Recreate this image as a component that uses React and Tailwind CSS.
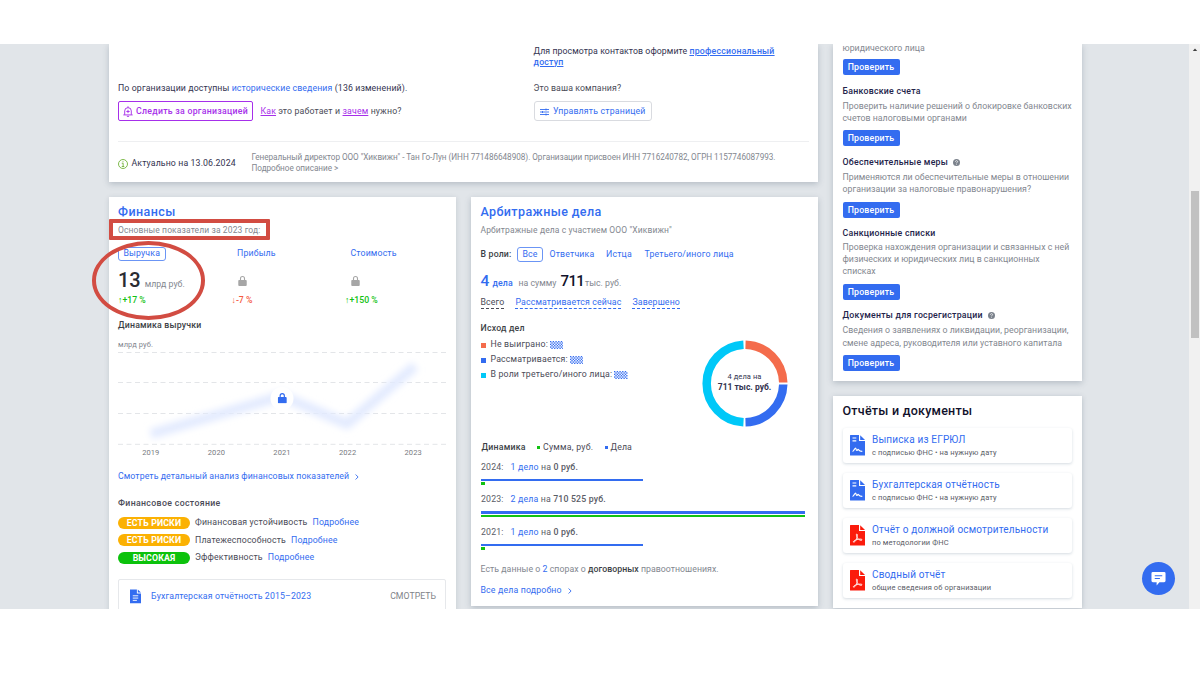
import React from "react";

const blue = "text-[#336cf0]";

function Lock({ className }) {
  return (
    <svg viewBox="0 0 16 18" className={className} fill="currentColor">
      <path
        fillRule="evenodd"
        d="M8 0a4.6 4.6 0 0 0-4.6 4.6V7H2a1.6 1.6 0 0 0-1.6 1.6v7.8A1.6 1.6 0 0 0 2 18h12a1.6 1.6 0 0 0 1.6-1.6V8.6A1.6 1.6 0 0 0 14 7h-1.4V4.6A4.6 4.6 0 0 0 8 0Zm2.6 7H5.4V4.6a2.6 2.6 0 0 1 5.2 0V7Z"
      />
    </svg>
  );
}

function Chevron() {
  return (
    <svg viewBox="0 0 4 6" className="w-[4px] h-[6px] ml-[6px]" fill="none" stroke="currentColor">
      <path d="M0.6 0.5 3.1 3 0.6 5.5" strokeWidth="0.9" />
    </svg>
  );
}

function Question() {
  return (
    <svg viewBox="0 0 14 14" className="w-[7px] h-[7px] ml-[5px]">
      <circle cx="7" cy="7" r="7" fill="#7b828c" />
      <path d="M4.9 5.4c0-2.9 4.3-2.7 4.3-.2C9.2 6.7 7 6.7 7 8.5M7 9.7v1.5" stroke="#fff" strokeWidth="1.5" fill="none" />
    </svg>
  );
}

// Hidden value placeholder
function Hatch() {
  const cells = [];
  for (let y = 0; y < 6; y++) {
    for (let x = 0; x < 10; x++) {
      if ((x + y) % 2 === 0) cells.push(<rect key={`${x}-${y}`} x={x} y={y} width="1" height="1" />);
    }
  }
  return (
    <svg viewBox="0 0 10 6" className="w-[13.5px] h-[8.1px] ml-[2px]" fill="#336cf0">
      {cells}
    </svg>
  );
}

function OrganizationCard() {
  return (
    <div className="h-[138px] bg-white px-[9px] shadow-[0_2px_6px_rgba(80,95,115,0.3)]">
      <div className="flex h-[97px]">
        <div className="w-[415.5px] pt-[38.5px]">
          <div className="leading-[11px] tracking-[0.12px] text-[#33334f]">
            По организации доступны <span className={blue}>исторические сведения</span> (136 изменений).
          </div>
          <div className="flex items-center mt-[7.5px]">
            <button className="flex items-center justify-center w-[134.5px] h-[20px] pt-px border-[1.5px] border-[#a62fea] rounded-[2px] text-[#a62fea] font-medium tracking-[0.26px]">
              <svg viewBox="0 0 18 20" className="w-[10px] h-[11px] mr-[3.5px] -mt-px" fill="none" stroke="currentColor" strokeWidth="1.7">
                <path d="M9 .5V3M3 16V9a6 6 0 0 1 12 0v7M0.5 16.2h17M7 18.8h4M9 7v6M6 10h6" />
              </svg>
              Следить за организацией
            </button>
            <div className="ml-[8px] pt-px tracking-[0.14px] text-[#4b4b57]">
              <span className="text-[#a62fea] underline">Как</span> это работает и{" "}
              <span className="text-[#a62fea] underline">зачем</span> нужно?
            </div>
          </div>
        </div>
        <div className="pt-[1.5px] w-[250px]">
          <div className="leading-[11px] tracking-[0.07px] text-[#33334f]">
            Для просмотра контактов оформите{" "}
            <span className="text-[#336cf0] font-medium underline tracking-[0.22px]">профессиональный доступ</span>
          </div>
          <div className="mt-[15px] leading-[11px] tracking-[0.1px] text-[#4b4b57]">Это ваша компания?</div>
          <button className="flex items-center justify-center w-[118.5px] h-[20px] mt-[7.5px] pt-px border border-[#d9dbe0] rounded-[3px] text-[#336cf0] tracking-[0.18px]">
            <svg viewBox="0 0 18 14" className="w-[9px] h-[8px] mr-[4px]" stroke="currentColor" strokeWidth="1.8">
              <path d="M0 2h18M0 7h18M0 12h18M12 0v4M5 5v4M12 10v4" />
            </svg>
            Управлять страницей
          </button>
        </div>
      </div>
      <div className="flex border-t border-[#eeeff1]">
        <div className="flex items-center w-[133.5px] h-[43px] text-[#33334f]">
          <svg viewBox="0 0 20 20" className="w-[10px] h-[10px] mr-[3.5px]" fill="none" stroke="#71b238" strokeWidth="1.8">
            <circle cx="10" cy="10" r="9" />
            <path d="M7.5 8.5h2.8V15M7.5 15h5M10 4.5v2" />
          </svg>
          <span className="tracking-[0.12px]">Актуально на 13.06.2024</span>
        </div>
        <div className="pt-[10px] text-[8.2px] leading-[11px] tracking-[-0.045px] text-[#83878f]">
          Генеральный директор ООО "Хиквижн" - Тан Го-Лун (ИНН 771486648908). Организации присвоен ИНН 7716240782, ОГРН
          1157746087993.
          <br />
          Подробное описание &gt;
        </div>
      </div>
    </div>
  );
}

const metrics = [
  { label: "Выручка", change: "↑+17 %", active: true },
  { label: "Прибыль", change: "↓-7 %", down: true },
  { label: "Стоимость", change: "↑+150 %" },
];

const states = [
  { badge: "ЕСТЬ РИСКИ", label: "Финансовая устойчивость" },
  { badge: "ЕСТЬ РИСКИ", label: "Платежеспособность" },
  { badge: "ВЫСОКАЯ", label: "Эффективность", good: true },
];

function FinanceCard() {
  return (
    <div className="relative w-[347px] h-[430px] bg-white pl-[9px] pr-[10px] pt-[7px] shadow-[0_1px_5px_rgba(80,95,115,0.2)]">
      <h2 className="text-[12.5px] leading-[16px] font-medium tracking-[0.45px] text-[#336cf0]">Финансы</h2>
      <div className="mt-[5px] leading-[11px] text-[8.5px] tracking-[0.12px] text-[#83878f]">
        Основные показатели за 2023 год:
      </div>

      <div className="flex mt-[10.5px]">
        {metrics.map((m) => (
          <div key={m.label} className="w-[113.5px] shrink-0">
            <div
              className={`flex items-center w-fit h-[14px] px-[4.5px] border rounded-[3px] text-[#336cf0] tracking-[0.15px] ${
                m.active ? "border-[#6b95f5]" : "border-transparent"
              }`}
            >
              {m.label}
            </div>
            <div className="flex items-center h-[20px] mt-[10.5px]">
              {m.active ? (
                <div className="flex items-baseline">
                  <span className="text-[20px] leading-[20px] font-medium text-[#292c33]">13</span>
                  <span className="ml-[4px] text-[#83878f]">млрд руб.</span>
                </div>
              ) : (
                <Lock className="w-[9px] h-[10px] ml-[6px] text-[#a6a6a6]" />
              )}
            </div>
            <div className={`mt-[4px] leading-[11px] font-medium ${m.down ? "text-[#f45a42]" : "text-[#12c212]"}`}>
              {m.change}
            </div>
          </div>
        ))}
      </div>

      <div className="mt-[14px] leading-[11px] font-medium tracking-[0.2px] text-[#3c3f46]">Динамика выручки</div>
      <div className="mt-[9px] leading-[10px] text-[7.5px] tracking-[0.08px] text-[#83878f]">млрд руб.</div>
      <svg viewBox="0 0 328 97" className="block w-[328px] h-[97px]">
        <defs>
          <filter id="soft" x="-10%" y="-20%" width="120%" height="140%">
            <feGaussianBlur stdDeviation="3.5" />
          </filter>
        </defs>
        <g stroke="#e3e5e8" strokeDasharray="5 3.5">
          <path d="M0 2.5h328M0 32.5h328M0 63.5h328M0 94.3h328" />
        </g>
        <path d="M33 84 164 46 229 74 297 16" fill="none" stroke="#e2eafe" strokeWidth="10" filter="url(#soft)" />
        <circle cx="164" cy="48.5" r="11.5" fill="#fff" />
        <svg x="159.5" y="43" width="9.5" height="10.5">
          <Lock className="w-[9.5px] h-[10.5px] text-[#336cf0]" />
        </svg>
      </svg>
      <div className="grid grid-cols-5 leading-[11px] text-[7.5px] text-center text-[#777a80] tracking-[0.1px]">
        <span>2019</span>
        <span>2020</span>
        <span>2021</span>
        <span>2022</span>
        <span>2023</span>
      </div>
      <div className="flex items-center mt-[13px] leading-[11px] tracking-[0.09px] text-[#336cf0]">
        Смотреть детальный анализ финансовых показателей
        <Chevron />
      </div>

      <div className="mt-[16px] leading-[11px] font-medium tracking-[0.34px] text-[#4b4b57]">Финансовое состояние</div>
      <div className="mt-[5px]">
        {states.map((s) => (
          <div key={s.label} className="flex items-center h-[17.5px] tracking-[0.15px]">
            <span
              className={`w-[72px] h-[12px] rounded-full text-center leading-[12.5px] font-bold text-white ${
                s.good ? "bg-[#0cc20c]" : "bg-[#fbb103]"
              }`}
            >
              {s.badge}
            </span>
            <span className="ml-[5px] text-[#4b4b57]">{s.label}</span>
            <span className="ml-[5px] text-[#336cf0]">Подробнее</span>
          </div>
        ))}
      </div>

      <div className="flex items-center mt-[12px] h-[36px] px-[11px] border border-[#e6e8eb] rounded-[2px]">
        <svg viewBox="0 0 12 15" className="w-[11px] h-[14.5px]" fill="#336cf0">
          <path d="M0 0h7.5v4.5H12V15H0Z" />
          <path d="M8.5 0 12 3.5H8.5Z" />
          <path d="M3 7h6M3 9.5h6M3 12h4.5" stroke="#fff" strokeWidth="1" />
        </svg>
        <span className="ml-[10px] tracking-[0.14px] text-[#336cf0]">Бухгалтерская отчётность 2015–2023</span>
        <span className="ml-auto -mr-[2px] text-[#808388]">СМОТРЕТЬ</span>
      </div>

      {/* Marker highlights over the revenue block */}
      <div className="absolute -left-[0.5px] top-[22px] w-[161px] h-[20.5px] border-4 border-[#d24c42] rounded-[1px]" />
      <div className="absolute -left-[17.5px] top-[43.5px] w-[113.5px] h-[79px] border-4 border-[#d24c42] rounded-[50%]" />
    </div>
  );
}

const outcomes = [
  { label: "Не выиграно:", color: "bg-[#f46c4c]" },
  { label: "Рассматривается:", color: "bg-[#336cf0]" },
  { label: "В роли третьего/иного лица:", color: "bg-[#00c8f8]" },
];

const dynamics = [
  { year: "2024:", count: "1 дело", sum: "0 руб.", cases: 162, money: 4 },
  { year: "2023:", count: "2 дела", sum: "710 525 руб.", cases: 323.5, money: 323.5 },
  { year: "2021:", count: "1 дело", sum: "0 руб.", cases: 162, money: 4 },
];

function ArbitrationCard() {
  return (
    <div className="w-[347px] h-[408.5px] bg-white px-[9.5px] pt-[7px] shadow-[0_2px_6px_rgba(80,95,115,0.3)]">
      <h2 className="text-[12.5px] leading-[16px] font-medium tracking-[0.4px] text-[#336cf0]">Арбитражные дела</h2>
      <div className="mt-[5px] leading-[11px] text-[8.5px] tracking-[0.12px] text-[#83878f]">
        Арбитражные дела с участием ООО "Хиквижн"
      </div>

      <div className="flex items-center h-[15px] mt-[11px] tracking-[0.17px] text-[#336cf0]">
        <span className="w-[36.5px] font-medium text-[#3c3f46]">В роли:</span>
        <span className="flex items-center justify-center w-[26px] h-[15px] border border-[#6b95f5] rounded-[3px]">Все</span>
        <span className="w-[56.5px] ml-[6.5px]">Ответчика</span>
        <span className="w-[38.5px]">Истца</span>
        <span>Третьего/иного лица</span>
      </div>

      <div className="flex items-baseline mt-[8.5px] leading-[20px] text-[#83878f]">
        <span className="text-[15.5px] w-[12px] font-medium text-[#336cf0]">4</span>
        <span className="w-[26px] font-medium tracking-[0.1px] text-[#336cf0]">дела</span>
        <span className="w-[42px]">на сумму</span>
        <span className="w-[24.5px] text-[15px] font-medium tracking-[-0.6px] text-[#11112b]">711</span>
        <span>тыс. руб.</span>
      </div>

      <div className="flex gap-[11px] mt-[4px] leading-[11px] tracking-[0.14px] text-[#336cf0]">
        <span className="border-b border-dashed border-[#4b4b57] text-[#4b4b57]">Всего</span>
        <span className="border-b border-dashed border-[#336cf0]">Рассматривается сейчас</span>
        <span className="border-b border-dashed border-[#336cf0]">Завершено</span>
      </div>

      <div className="mt-[14.5px] leading-[11px] font-medium tracking-[0.2px] text-[#3c3f46]">Исход дел</div>
      <div className="flex justify-between h-[108px] pr-[20.5px]">
        <div className="pt-[3.5px]">
          {outcomes.map((o) => (
            <div key={o.label} className="flex items-center h-[15px] tracking-[0.17px] text-[#4b4b57]">
              <span className={`w-[5px] h-[5px] mr-[5px] ${o.color}`} />
              {o.label}
              <Hatch />
            </div>
          ))}
        </div>
        <div className="grid place-items-center w-[87px] h-[87px] mt-[5.5px]">
          <svg viewBox="0 0 87 87" className="col-start-1 row-start-1 w-[87px] h-[87px]" fill="none" strokeWidth="8.5">
            <path d="M44.5 4.75A38.8 38.8 0 0 1 82.25 42.5" stroke="#f46c4c" />
            <path d="M82.25 44.5A38.8 38.8 0 0 1 44.5 82.25" stroke="#336cf0" />
            <path d="M42.5 82.25A38.8 38.8 0 0 1 42.5 4.75" stroke="#00c8f8" />
          </svg>
          <div className="col-start-1 row-start-1 -mt-[2px] text-center leading-[10.5px] text-[#33334f]">
            <div className="text-[7.5px] tracking-[0.08px]">4 дела на</div>
            <div className="text-[8.5px] font-bold">711 тыс. руб.</div>
          </div>
        </div>
      </div>

      <div className="flex items-center leading-[11px] pl-px tracking-[0.24px] text-[#4b4b57]">
        <span className="w-[55px] font-medium text-[#3c3f46]">Динамика</span>
        <span className="w-[3.5px] h-[3.5px] mr-[3px] bg-[#12c212]" />
        <span className="w-[61.5px]">Сумма, руб.</span>
        <span className="w-[3.5px] h-[3.5px] mr-[2.5px] bg-[#336cf0]" />
        <span className="tracking-[0.1px]">Дела</span>
      </div>
      <div className="pl-[0.5px] mt-[8.5px]">
        {dynamics.map((d) => (
          <div key={d.year} className="h-[32.5px]">
            <div className="leading-[11px] text-[#5a5c66] tracking-[0.16px]">
              {d.year}
              <span className="ml-[7px] text-[#336cf0]">{d.count}</span> на <span className="font-medium">{d.sum}</span>
            </div>
            <div className="h-[2.5px] mt-[6px] bg-[#336cf0]" style={{ width: d.cases }} />
            <div className="h-[2.5px] mt-[1px] bg-[#12c212]" style={{ width: d.money }} />
          </div>
        ))}
      </div>

      <div className="mt-[5px] leading-[11px] tracking-[0.04px] text-[#83878f]">
        Есть данные о <span className={blue}>2</span> спорах о{" "}
        <span className="font-medium text-[#3c3f46]">договорных</span> правоотношениях.
      </div>
      <div className="flex items-center mt-[10px] leading-[11px] tracking-[0.16px] text-[#336cf0]">
        Все дела подробно
        <Chevron />
      </div>
    </div>
  );
}

const checks = [
  { title: "Банковские счета", lines: ["Проверить наличие решений о блокировке банковских", "счетов налоговыми органами"] },
  {
    title: "Обеспечительные меры",
    help: true,
    lines: ["Применяются ли обеспечительные меры в отношении", "организации за налоговые правонарушения?"],
  },
  {
    title: "Санкционные списки",
    lines: ["Проверка нахождения организации и связанных с ней", "физических и юридических лиц в санкционных", "списках"],
  },
  {
    title: "Документы для госрегистрации",
    help: true,
    lines: ["Сведения о заявлениях о ликвидации, реорганизации,", "смене адреса, руководителя или уставного капитала"],
  },
];

function CheckButton() {
  return (
    <button className="block w-[57px] h-[16px] rounded-[2px] bg-[#336cf0] text-center leading-[16.5px] font-medium tracking-[0.2px] text-white">
      Проверить
    </button>
  );
}

function ChecksCard() {
  return (
    <div className="h-[336.5px] bg-white pl-[9.5px] shadow-[0_2px_6px_rgba(80,95,115,0.3)]">
      <div className="h-[15px] leading-[8px] tracking-[0.02px] text-[#83878f]">юридического лица</div>
      <CheckButton />
      {checks.map((c) => (
        <div key={c.title} className="pt-[10.5px]">
          <div className="flex items-center leading-[11px] font-medium tracking-[0.26px] text-[#23234a]">
            {c.title}
            {c.help && <Question />}
          </div>
          <div
            className={`mt-[3px] mb-[5.8px] text-[#83878f] tracking-[0.02px] whitespace-nowrap ${
              c.lines.length > 2 ? "leading-[11.9px]" : "leading-[12.5px]"
            }`}
          >
            {c.lines.map((line) => (
              <div key={line}>{line}</div>
            ))}
          </div>
          <CheckButton />
        </div>
      ))}
    </div>
  );
}

const documents = [
  { title: "Выписка из ЕГРЮЛ", note: "с подписью ФНС • на нужную дату" },
  { title: "Бухгалтерская отчётность", note: "с подписью ФНС • на нужную дату" },
  { title: "Отчёт о должной осмотрительности", note: "по методологии ФНС", pdf: true },
  { title: "Сводный отчёт", note: "общие сведения об организации", pdf: true },
];

function DocIcon({ pdf }) {
  return (
    <svg viewBox="0 0 15 21" className="w-[15px] h-[21px]" fill={pdf ? "#fb1b0c" : "#336cf0"}>
      <path d="M0.5 0H9v6h6v14.5H0.5a.5.5 0 0 1-.5-.5V.5A.5.5 0 0 1 .5 0Z" />
      <path d="M10.2 0.3 15 5H10.2Z" />
      {pdf ? (
        <path
          d="M6.8 9c.9 0 .6 2.400.2 3.700-.7 2-1.700 4-3 4.500-.9.2-.9-.8.2-1.500 1.800-1 3.800-1.600 6-1.600 2.200 0 2.400 1.300.9 1.200-2-.2-3.300-1.400-4.100-3-.6-1.300-.9-3.300-.2-3.300Z"
          fill="none"
          stroke="#fff"
          strokeWidth="0.9"
        />
      ) : (
        <path
          d="M2.500 3h3.800M2.500 5.800h3.800M2.500 16.500c1.500 0 2.200-3.500 3-3.500s.4 2.500 1.200 2.500 1-1.500 1.600-1 .8 2 4 1.900"
          fill="none"
          stroke="#fff"
          strokeWidth="1.2"
        />
      )}
    </svg>
  );
}

function DocumentsCard() {
  return (
    <div className="h-[212px] bg-white pl-[9.5px] pr-[9.5px] pt-[7px] shadow-[0_1px_5px_rgba(80,95,115,0.3)]">
      <h2 className="text-[12.5px] leading-[16px] font-medium tracking-[0.25px] text-[#11112b]">Отчёты и документы</h2>
      <div className="flex flex-col gap-[10px] mt-[9px]">
        {documents.map((d) => (
          <div
            key={d.title}
            className="flex items-center h-[35px] pl-[7.5px] rounded-[3px] shadow-[0_1px_3px_rgba(60,90,120,0.22)]"
          >
            <DocIcon pdf={d.pdf} />
            <div className="ml-[7px] pt-px">
              <div className="leading-[13px] text-[10px] tracking-[0.17px] text-[#336cf0]">{d.title}</div>
              <div className="leading-[13px] text-[7.5px] tracking-[0.12px] text-[#5a5c66]">{d.note}</div>
            </div>
          </div>
        ))}
      </div>
    </div>
  );
}

function App() {
  return (
    <div className="w-[1200px] h-[675px] pt-[44px] overflow-hidden bg-white font-['Roboto','Noto_Sans',sans-serif] text-[8.75px]">
      <div className="relative flex h-[565px] pl-[109px] overflow-hidden bg-[#e1e5e9]">
        <div className="w-[709px] shrink-0">
          <OrganizationCard />
          <div className="flex items-start justify-between mt-[15px]">
            <FinanceCard />
            <ArbitrationCard />
          </div>
        </div>
        <div className="w-[248.5px] ml-[15px] shrink-0">
          <ChecksCard />
          <div className="mt-[15.5px]">
            <DocumentsCard />
          </div>
        </div>

        {/* Scrollbar */}
        <div className="w-[11px] ml-auto bg-[#f1f1f1] pl-[2px]">
          <svg viewBox="0 0 8 8" className="w-[8px] h-[8px] mt-[2px]">
            <path d="M4 2.5 6.2 5H1.8Z" fill="#404040" />
          </svg>
          <div className="w-[8px] h-[147px] mt-[137px] bg-[#c1c1c1]" />
        </div>

        {/* Chat button */}
        <button className="absolute left-[1142px] top-[518px] flex items-center justify-center w-[32.5px] h-[32.5px] rounded-full bg-[#336cf0]">
          <svg viewBox="0 0 16 16" className="w-[15px] h-[15px]" fill="#fff">
            <path d="M2 1h12a1.5 1.5 0 0 1 1.5 1.5v8A1.5 1.5 0 0 1 14 12H9l-3 3.5V12H2A1.5 1.5 0 0 1 .5 10.5v-8A1.5 1.5 0 0 1 2 1Z" />
            <path d="M4 5h8M4 8h5.5" stroke="#336cf0" strokeWidth="1.2" />
          </svg>
        </button>
      </div>
    </div>
  );
}

export default App;
